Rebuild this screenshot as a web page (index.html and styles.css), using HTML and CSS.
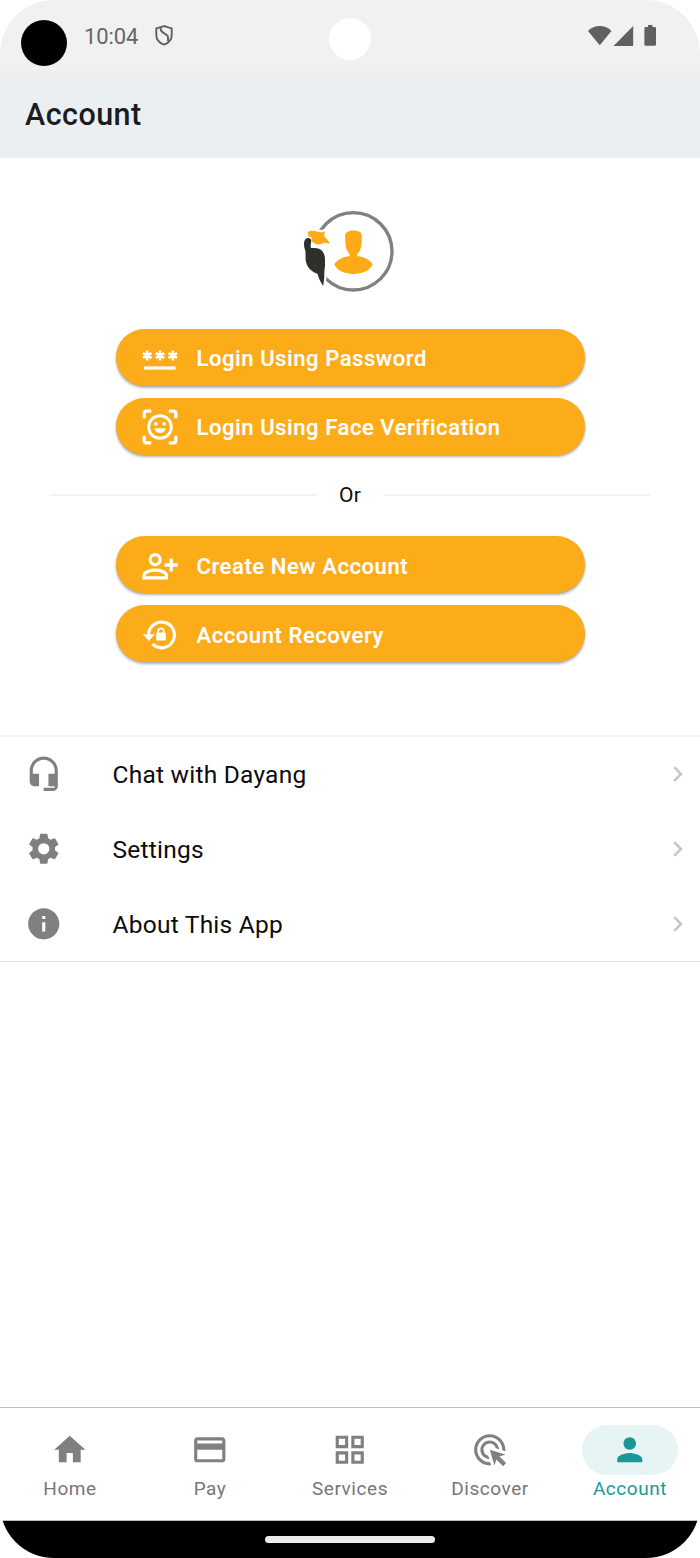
FILE: index.html
```html
<!DOCTYPE html>
<html lang="en">
<head>
<meta charset="utf-8">
<title>Account</title>
<link rel="stylesheet" href="styles.css">
</head>
<body>
<div class="phone">
  <div class="status">
    <span class="lens"></span>
    <span class="time">10:04</span>
    <svg class="shield" viewBox="0 0 18 21" fill="none" stroke="#606060" stroke-width="1.900"><path d="M9 1.100 1.300 3.400V10c0 4.500 3 8 7.700 9.700 4.700-1.700 7.700-5.200 7.700-9.700V3.400z"/><path d="M5.600 2.500c-.6 7 7.400 5.500 7.400 9.500v4"/></svg>
    <span class="camera"></span>
    <svg class="signals" viewBox="0 0 70 22" fill="#606060"><path d="M0 6C6-.8 17.500-.8 23.500 6L11.750 20.300z"/><path d="M45.200 1v20H25.500z"/><path d="M60 0h4.500v2h2.200q1.300 0 1.300 1.300V19.500q0 1.300-1.300 1.300h-9q-1.300 0-1.300-1.300V3.300Q56.400 2 57.700 2H60z"/></svg>
  </div>
  <header class="appbar"><h1>Account</h1></header>
  <main class="content">
    <svg class="avatar" viewBox="302 210 94 84">
      <circle cx="353.300" cy="251.300" r="38.700" fill="none" stroke="#808184" stroke-width="3.400"/>
      <path d="M303 236C308 231 315 229 326 230L331 246 326.500 252 326.500 279 323 287 318 280 302 257z" fill="#fff"/>
      <path d="M353.700 230.500c6.200 0 8.300 2.300 8.200 6.500-.1 6-.5 10.900-2.200 13.900-1.100 1.900-2.500 2.600-2.500 4.500 0 .7.500.8 1.800.9 6.300.9 11.200 4 13.800 8.300-3.200 6-10.200 9.500-19.300 9.500s-16.100-3.500-19.300-9.500c2.600-4.300 7.500-7.400 13.800-8.300 1.300-.1 1.800-.2 1.800-.9 0-1.900-1.400-2.600-2.500-4.500-1.700-3-2.100-7.900-2.200-13.900-.1-4.200 2.200-6.500 8.600-6.500z" fill="#fbab18"/>
      <path d="M307.300 232.300c1.600-1.700 4.700-2.100 8.300-1.100 3.600.9 6.300 1.500 9.700.1-1 2.600-1.800 4.300 0 6.200 1.700 1.600 3.100 3.100 4.700 6.500-3.600-1.700-5.900-1.300-9.200.1-3.400 1-6.100.3-9.300-3.300-.6-1.100 0-2.400.3-3.600-1.700-.9-3.200-.7-4.500-.6 1.500-1.200 1.700-3.300 0-4.300z" fill="#fbab18"/>
      <path d="M304 243c.2-3.300 2-5.200 4.800-5.100 2 .3 2.700 2.500 2.300 4.600-.6 2.200-.7 4.200 0 5.500 2.300-.2 5.600-.2 8.500 1 4 2.200 5.400 6 5.400 10.500v7c-.5 2.500-.7 5.500-.7 8.500 0 3.800-.6 7.700-1.200 11-2.100-3.200-4.400-7.500-5.600-12.200-5.700-1.900-9.900-5.800-11.400-11.500-1.200-4.600 0-8.300-.9-12.300-.9-2-1.300-4.500-1.200-7z" fill="#2d302b"/>
    </svg>
    <div class="actions">
      <button class="pill">
        <svg class="icon" viewBox="0 0 36 36" fill="none" stroke="#fff"><path d="M2.200 28H33.700" stroke-width="3.300"/><path d="M5.200 10.500v10M.9 13.100l8.600 4.800M9.500 13.100l-8.600 4.800M18 10.500v10M13.700 13.100l8.600 4.800M22.300 13.100l-8.600 4.800M30.800 10.500v10M26.500 13.100l8.600 4.800M35.100 13.100l-8.600 4.800" stroke-width="2.500"/></svg>
        <span>Login Using Password</span>
      </button>
      <button class="pill">
        <svg class="icon" viewBox="0 0 36 36" fill="none" stroke="#fff" stroke-width="3.300"><path d="M2.200 9.300V4.200q0-2 2-2h5M26.800 2.200h5q2 0 2 2v5.100M33.800 26.700v5.100q0 2-2 2h-5M9.200 33.800h-5q-2 0-2-2v-5.100"/><circle cx="18" cy="18" r="11.300" stroke-width="3"/><g fill="#fff" stroke="none"><circle cx="13.900" cy="14.800" r="1.900"/><circle cx="22.100" cy="14.800" r="1.900"/><path d="M12.200 19.200h11.600c-.8 3.100-2.900 4.700-5.800 4.700s-5-1.600-5.800-4.700z"/></g></svg>
        <span>Login Using Face Verification</span>
      </button>
      <div class="divider"><span>Or</span></div>
      <button class="pill lower">
        <svg class="icon" viewBox="0 0 36 36" fill="none" stroke="#fff" stroke-width="3.300"><circle cx="13.200" cy="11.600" r="5"/><path d="M2 29.800v-2.300c0-3.500 6.500-5.300 11.200-5.300s11.200 1.800 11.200 5.300v2.300zM29.200 10.600v12.800M22.600 17h13.200"/></svg>
        <span>Create New Account</span>
      </button>
      <button class="pill lower">
        <svg class="icon" viewBox="0 0 36 36" fill="none" stroke="#fff" stroke-width="3.100"><path d="M6.600 18.500A12.900 12.900 0 1 1 10.500 27.200"/><path d="M.8 17.200h12L6.800 24z" fill="#fff" stroke="none"/><path d="M16.300 16v-2a2.700 2.700 0 0 1 5.400 0v2" stroke-width="1.800"/><rect x="14.200" y="15.600" width="9.600" height="8" rx="1.200" fill="#fff" stroke="none"/></svg>
        <span>Account Recovery</span>
      </button>
    </div>
    <ul class="menu">
      <li>
        <svg class="icon" viewBox="0 0 24 24"><path d="M12 1c-4.970 0-9 4.030-9 9v7c0 1.660 1.340 3 3 3h3v-8H5v-2c0-3.870 3.130-7 7-7s7 3.130 7 7v2h-4v8h4v1h-7v2h6c1.660 0 3-1.340 3-3V10c0-4.970-4.030-9-9-9z"/></svg>
        <span>Chat with Dayang</span>
        <svg class="chevron" viewBox="0 0 10 16"><path d="M1.300 1.200 8 8l-6.700 6.800"/></svg>
      </li>
      <li>
        <svg class="icon" viewBox="0 0 24 24"><path d="M19.140 12.940c.04-.3.060-.61.060-.94 0-.32-.02-.64-.07-.94l2.030-1.580c.18-.14.230-.41.120-.61l-1.920-3.320c-.12-.22-.37-.29-.59-.22l-2.390.960c-.5-.38-1.030-.7-1.620-.94l-.36-2.540c-.04-.24-.24-.41-.48-.41h-3.840c-.24 0-.43.170-.47.410l-.36 2.540c-.59.240-1.130.570-1.620.940l-2.390-.96c-.22-.08-.47 0-.59.220L2.740 8.870c-.12.210-.08.470.12.610l2.030 1.580c-.05.3-.09.630-.09.940s.02.640.07.940l-2.030 1.580c-.18.140-.23.410-.12.610l1.920 3.320c.12.220.37.290.59.220l2.390-.96c.5.380 1.030.7 1.620.94l.36 2.540c.05.240.24.410.48.410h3.840c.24 0 .44-.17.470-.41l.36-2.540c.59-.24 1.130-.56 1.620-.94l2.390.96c.22.080.47 0 .59-.22l1.920-3.320c.12-.22.070-.47-.12-.61zM12 15.600A3.600 3.600 0 1 1 12 8.400a3.600 3.600 0 0 1 0 7.200z"/></svg>
        <span>Settings</span>
        <svg class="chevron" viewBox="0 0 10 16"><path d="M1.300 1.200 8 8l-6.700 6.800"/></svg>
      </li>
      <li>
        <svg class="icon" viewBox="0 0 24 24"><path d="M12 2C6.480 2 2 6.480 2 12s4.480 10 10 10 10-4.480 10-10S17.520 2 12 2zm1 15h-2v-6h2v6zm0-8h-2V7h2v2z"/></svg>
        <span>About This App</span>
        <svg class="chevron" viewBox="0 0 10 16"><path d="M1.300 1.200 8 8l-6.700 6.800"/></svg>
      </li>
    </ul>
  </main>
  <nav class="tabs">
    <a class="tab"><span class="tab-icon"><svg class="icon" viewBox="0 0 24 24"><path d="M10 20v-6h4v6h5v-8h3L12 3 2 12h3v8z"/></svg></span><span>Home</span></a>
    <a class="tab"><span class="tab-icon"><svg class="icon" viewBox="0 0 24 24"><path d="M20 4H4c-1.110 0-1.990.89-1.990 2L2 18c0 1.110.89 2 2 2h16c1.110 0 2-.89 2-2V6c0-1.110-.89-2-2-2zm0 14H4v-6h16v6zm0-10H4V6h16v2z"/></svg></span><span>Pay</span></a>
    <a class="tab"><span class="tab-icon"><svg class="icon" viewBox="0 0 24 24"><path fill-rule="evenodd" d="M3 3v8h8V3H3zm6 6H5V5h4v4zm-6 4v8h8v-8H3zm6 6H5v-4h4v4zm4-16v8h8V3h-8zm6 6h-4V5h4v4zm-6 4v8h8v-8h-8zm6 6h-4v-4h4v4z"/></svg></span><span>Services</span></a>
    <a class="tab"><span class="tab-icon"><svg class="icon" viewBox="0 0 24 24"><path d="M11.710 17.990C8.530 17.840 6 15.220 6 12c0-3.310 2.690-6 6-6 3.220 0 5.840 2.530 5.990 5.710l-2.100-.63C15.480 9.310 13.890 8 12 8c-2.210 0-4 1.790-4 4 0 1.890 1.310 3.480 3.080 3.890l.63 2.100zM22 12c0 .3-.01.6-.04.9l-1.970-.59c.01-.1.010-.21.010-.31 0-4.420-3.580-8-8-8s-8 3.580-8 8 3.580 8 8 8c.1 0 .21 0 .31-.01l.59 1.970c-.3.030-.6.040-.9.040-5.520 0-10-4.480-10-10S6.480 2 12 2s10 4.480 10 10zm-3.770 4.260L22 15l-10-3 3 10 1.260-3.770 4.270 4.270 1.980-1.980-4.280-4.260z"/></svg></span><span>Discover</span></a>
    <a class="tab selected"><span class="tab-icon"><svg class="icon" viewBox="0 0 24 24"><path d="M12 12c2.210 0 4-1.790 4-4s-1.790-4-4-4-4 1.790-4 4 1.790 4 4 4zm0 2c-2.670 0-8 1.340-8 4v2h16v-2c0-2.660-5.330-4-8-4z"/></svg></span><span>Account</span></a>
  </nav>
  <div class="gesture"><span></span></div>
</div>
</body>
</html>
```

FILE: styles.css
```css
* { box-sizing: border-box; }
body { margin: 0; background: #fff; font-family: Roboto, sans-serif; color: #0c0c0c; }
svg { display: block; flex: none; }
.phone { width: 700px; height: 1558px; border-radius: 54px; overflow: hidden; display: flex; flex-direction: column; background: #fff; }

.status { position: relative; flex: none; height: 71px; background: #f1f1f1; display: flex; align-items: flex-start; padding: 20px 42px 0 21px; }
.lens { width: 46px; height: 46px; border-radius: 50%; background: #000; }
.time { margin: 3px 0 0 17px; width: 71px; font-size: 22px; line-height: 28px; letter-spacing: -0.1px; color: #666; }
.shield { width: 18px; height: 21px; margin-top: 5px; }
.camera { position: absolute; left: 329px; top: 18px; width: 42px; height: 42px; border-radius: 50%; background: #fff; }
.signals { width: 70px; height: 22px; margin: 5px 0 0 auto; }

.appbar { flex: none; height: 87px; background: #ebeff2; padding: 0 25px; display: flex; align-items: center; }
.appbar h1 { margin: 0; font-size: 30.5px; line-height: 36px; font-weight: 500; letter-spacing: 0.45px; color: #1b1c1d; }

.content { flex: 1; display: flex; flex-direction: column; }
.avatar { width: 94px; height: 84px; margin: 52px 0 0 302px; }
.actions { padding: 35px 50px 0; display: flex; flex-direction: column; align-items: center; gap: 12px; }
.pill { width: 469px; height: 57px; border: 0; border-radius: 29px; background: #fcab19; box-shadow: 0 2px 3px rgba(0,0,0,.28), 0 1px 2px rgba(0,0,0,.1); padding: 0 26px; display: flex; align-items: center; gap: 19px; font: 500 22px/28px Roboto, sans-serif; letter-spacing: 0.58px; color: #fff; -webkit-text-stroke: 0.2px #fff; }
.pill .icon { width: 36px; height: 36px; }
.pill span { padding-top: 3px; }
.pill.lower { padding-top: 2px; }
.divider { width: 600px; height: 57px; display: flex; align-items: center; gap: 22px; font-size: 21px; line-height: 26px; letter-spacing: 0.2px; padding-bottom: 1px; }
.divider::before, .divider::after { content: ""; flex: 1; height: 2px; background: #f3f3f3; }

.menu { list-style: none; margin: 73px 0 0; padding: 0; border-top: 2px solid #f4f4f4; border-bottom: 1px solid #e5e5e5; }
.menu li { height: 75px; display: flex; align-items: center; padding: 0 17px 1px 25px; font-size: 24.5px; line-height: 32px; letter-spacing: 0.24px; }
.menu li:last-child { height: 74px; padding-bottom: 0; }
.menu .icon { width: 37.5px; height: 37.5px; fill: #808080; margin-right: 50px; }
.menu span { padding-top: 2px; }
.chevron { width: 10px; height: 16px; margin-left: auto; fill: none; stroke: #c5c5c5; stroke-width: 2.5; }

.tabs { flex: none; height: 114px; border-top: 1px solid #c0c0c0; border-bottom: 1px solid #bbb; display: flex; }
.tab { flex: 1; display: flex; flex-direction: column; align-items: center; padding-top: 17px; color: #777; font-size: 19px; line-height: 27px; letter-spacing: 0.55px; }
.tab-icon { width: 96px; height: 50px; border-radius: 25px; display: grid; place-items: center; }
.tab .icon { width: 37.5px; height: 37.5px; fill: #808080; }
.selected { color: #1b9896; }
.selected .tab-icon { background: #e6f4f4; }
.selected .icon { fill: #1b9896; }
.gesture { flex: none; height: 37px; background: #000; display: flex; justify-content: center; padding-top: 15px; }
.gesture span { width: 170px; height: 7px; border-radius: 4px; background: #ececec; }
```
